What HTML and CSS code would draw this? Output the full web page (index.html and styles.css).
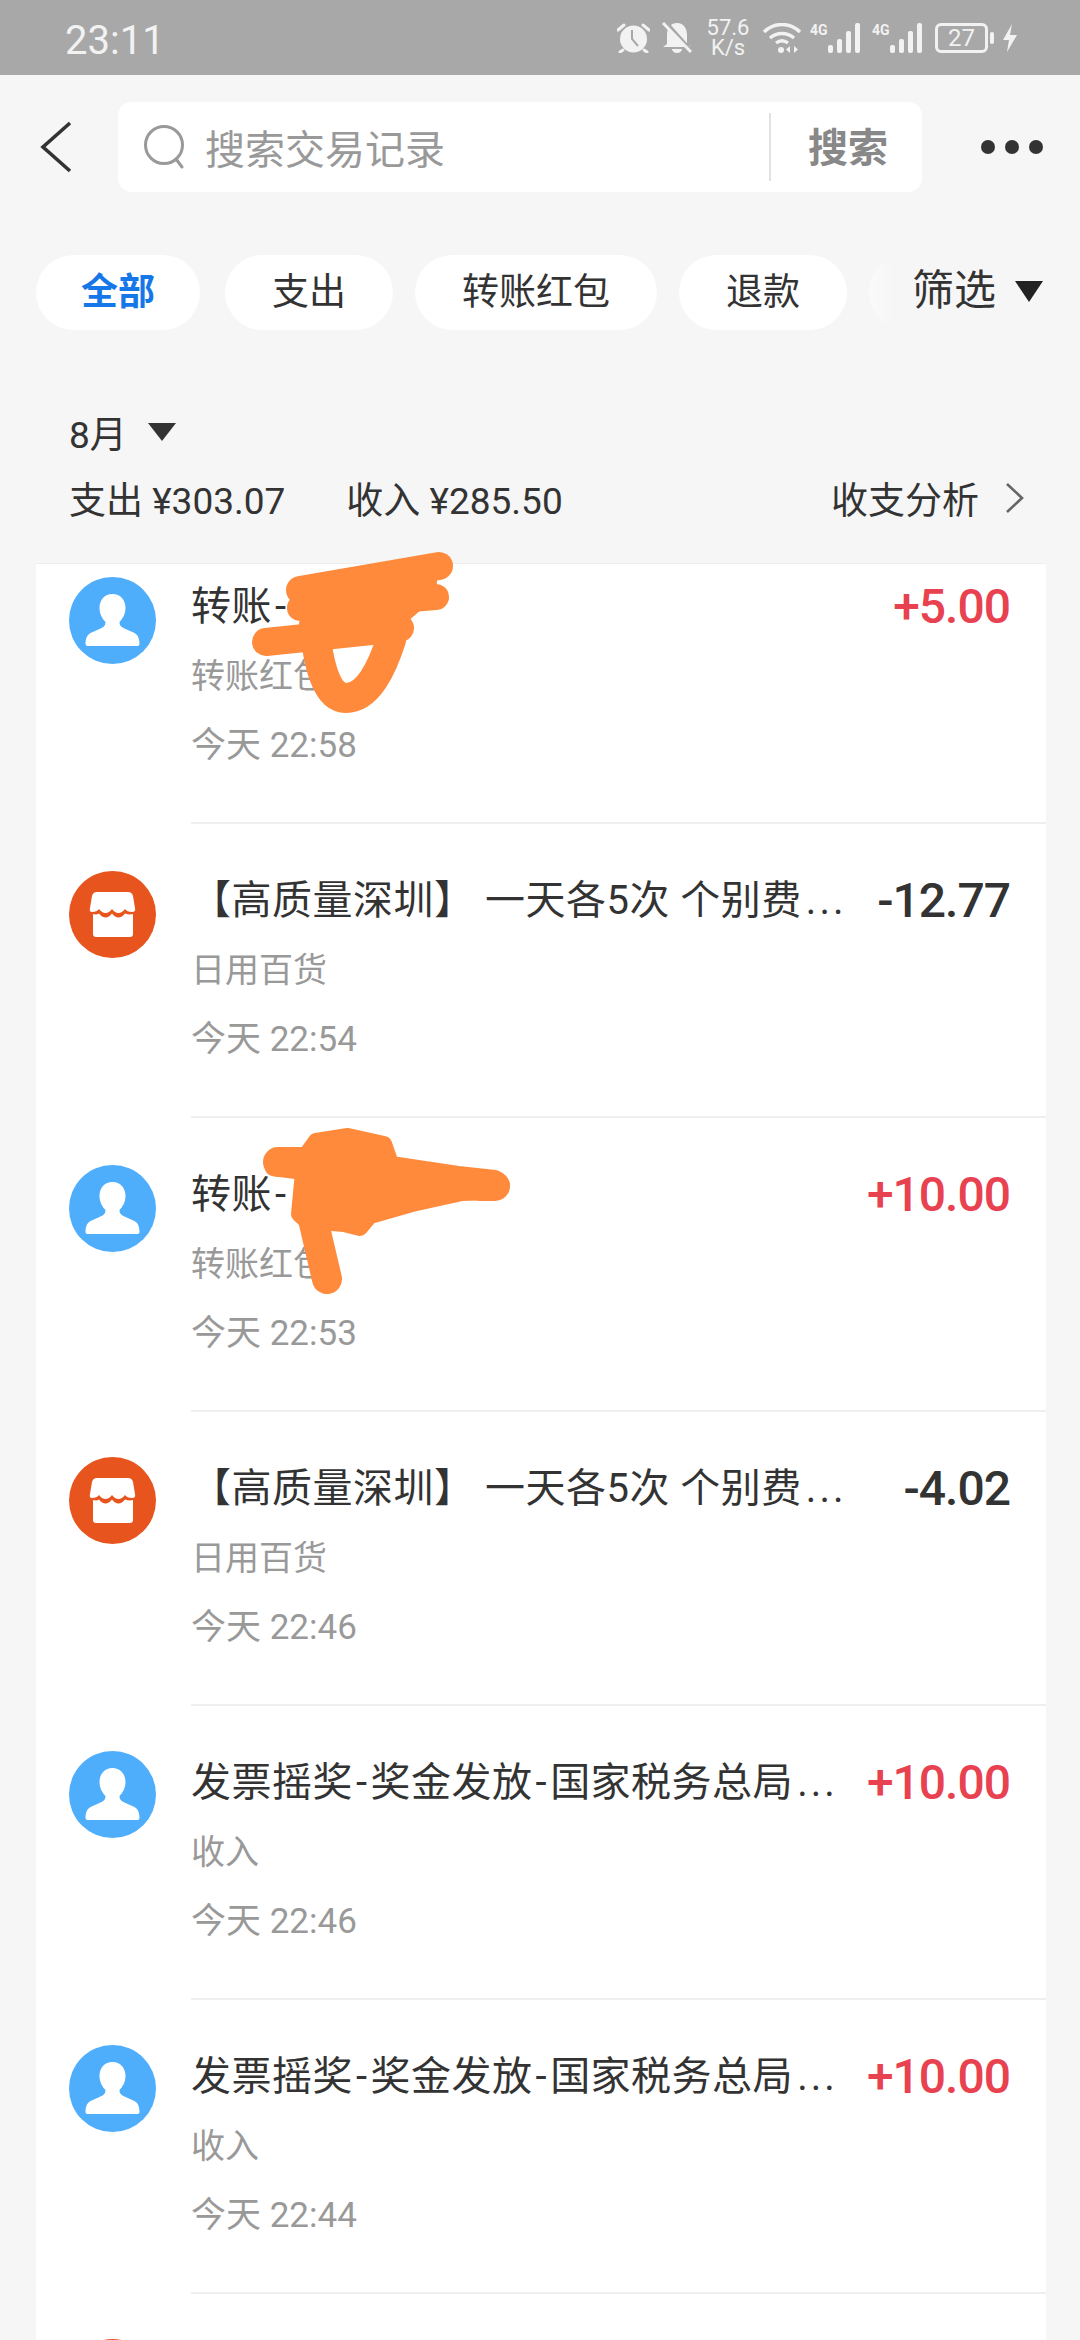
FILE: index.html
```html
<!DOCTYPE html>
<html lang="zh">
<head>
<meta charset="utf-8">
<title>交易记录</title>
<link rel="stylesheet" href="styles.css">
</head>
<body>
<div class="page">
  <header class="status">
    <span class="clock">23:11</span>
    <div class="status-icons">
      <svg class="ic-alarm" width="33" height="30" viewBox="0 0 33 30"><circle cx="16.500" cy="16" r="13.500" fill="#f2f2f2"/><path d="M15 7v9l6 7" fill="none" stroke="#a8a8a8" stroke-width="2"/><path d="M1 7l6-5M32 7l-6-5M6 27l-3 2M27 27l3 2" stroke="#f2f2f2" stroke-width="3" stroke-linecap="round"/></svg>
      <svg class="ic-bell" width="30" height="32" viewBox="0 0 30 32"><path d="M15 1C8 1 5 7 5 13v9l-4 3h28l-4-3v-9C25 7 22 1 15 1z" fill="#f2f2f2"/><path d="M10 27h10a5 4 0 0 1-10 0z" fill="#f2f2f2"/><path d="M4 0l26 29" stroke="#a8a8a8" stroke-width="3"/><path d="M1 1l28 29" stroke="#f2f2f2" stroke-width="3"/></svg>
      <div class="speed">57.6<br>K/s</div>
      <svg class="ic-wifi" width="38" height="30" viewBox="0 0 38 30"><path d="M1 9c10-10 26-10 36 0M7 15c7-6 17-6 24 0M13 20c4-3 8-3 12 0" fill="none" stroke="#f2f2f2" stroke-width="3.400"/><circle cx="18" cy="27" r="3" fill="#f2f2f2"/><path d="M27 23l-4 3.500 4 3.500zM31 23l4 3.500-4 3.500z" fill="#f2f2f2"/></svg>
      <div class="signal"><span class="net">4G</span><span class="bars"><i class="b1"></i><i class="b2"></i><i class="b3"></i><i class="b4"></i></span></div>
      <div class="signal"><span class="net">4G</span><span class="bars"><i class="b1"></i><i class="b2"></i><i class="b3"></i><i class="b4"></i></span></div>
      <div class="battery"><span class="batt-body">27</span><span class="batt-nub"></span></div>
      <svg class="ic-bolt" width="14" height="28" viewBox="0 0 14 28"><path d="M9 0L0 16h6l-2 12 10-17H7z" fill="#f2f2f2"/></svg>
    </div>
  </header>

  <nav class="nav">
    <svg class="back" width="32" height="52" viewBox="0 0 32 52"><path d="M30 2L3 26l27 24" fill="none" stroke="#333" stroke-width="3.600"/></svg>
    <div class="search">
      <svg class="search-ic" width="44" height="46" viewBox="0 0 44 46"><circle cx="21" cy="21" r="18.500" fill="none" stroke="#999" stroke-width="3"/><path d="M33 35l6 8" stroke="#999" stroke-width="3" stroke-linecap="round"/></svg>
      <span class="placeholder">搜索交易记录</span>
      <span class="search-btn">搜索</span>
    </div>
    <div class="more"><i></i><i></i><i></i></div>
  </nav>

  <div class="filters">
    <div class="chips">
      <span class="chip active">全部</span>
      <span class="chip">支出</span>
      <span class="chip">转账红包</span>
      <span class="chip">退款</span>
      <span class="chip chip-hidden"></span>
    </div>
    <div class="filter-btn"><span>筛选</span><i class="tri tri-lg"></i></div>
  </div>

  <section class="summary">
    <div class="month"><span>8月</span><i class="tri"></i></div>
    <div class="totals">
      <span class="out">支出 ¥303.07</span>
      <span class="in">收入 ¥285.50</span>
      <span class="analysis">收支分析</span>
      <svg class="more-arrow" width="20" height="32" viewBox="0 0 20 32"><path d="M2 2l15 14L2 30" fill="none" stroke="#666" stroke-width="2.600"/></svg>
    </div>
  </section>

  <main class="list">
    <div class="list-inner">
      <article class="row">
        <svg class="avatar" viewBox="0 0 87 87"><circle cx="43.500" cy="43.500" r="43.500" fill="#4eaefc"/><path class="person" d="M43.500 17c-8 0-13 6-13 14 0 6 3 11 6 14 0 4-2 5-6 7l-9 4c-4 2-5 7-5 11q0 2 2 2h50q2 0 2-2c0-4-1-9-5-11l-9-4c-4-2-6-3-6-7 3-3 6-8 6-14 0-8-5-14-13-14z"/></svg>
        <div class="body">
          <div class="top"><span class="title">转账<span class="dash">-</span></span><span class="amt plus">+5.00</span></div>
          <div class="sub">转账红包</div>
          <div class="time">今天 22:58</div>
        </div>
      </article>
      <article class="row">
        <svg class="avatar" viewBox="0 0 87 87"><circle cx="43.500" cy="43.500" r="43.500" fill="#e8541e"/><path class="shop" d="M28 21h31q4 0 5 4l2 12q1 4-3 4-5 0-7-3-3 4-6.500 4t-6.500-4q-3 4-6.500 4t-6.500-4q-2 3-7 3-3 0-2-4l2-12q1-4 5-4z"/><path class="shop" d="M24 43q4 1 6-.5 3 4 6.500 4t6.500-4q3 4 6.500 4t6.500-4q4 1.500 8 .5v20q0 3-3 3H27q-3 0-3-3z"/></svg>
        <div class="body">
          <div class="top"><span class="title">【高质量深圳】 一天各5次 个别费<span class="ell">...</span></span><span class="amt">-12.77</span></div>
          <div class="sub">日用百货</div>
          <div class="time">今天 22:54</div>
        </div>
      </article>
      <article class="row">
        <svg class="avatar" viewBox="0 0 87 87"><circle cx="43.500" cy="43.500" r="43.500" fill="#4eaefc"/><path class="person" d="M43.500 17c-8 0-13 6-13 14 0 6 3 11 6 14 0 4-2 5-6 7l-9 4c-4 2-5 7-5 11q0 2 2 2h50q2 0 2-2c0-4-1-9-5-11l-9-4c-4-2-6-3-6-7 3-3 6-8 6-14 0-8-5-14-13-14z"/></svg>
        <div class="body">
          <div class="top"><span class="title">转账<span class="dash">-</span></span><span class="amt plus">+10.00</span></div>
          <div class="sub">转账红包</div>
          <div class="time">今天 22:53</div>
        </div>
      </article>
      <article class="row">
        <svg class="avatar" viewBox="0 0 87 87"><circle cx="43.500" cy="43.500" r="43.500" fill="#e8541e"/><path class="shop" d="M28 21h31q4 0 5 4l2 12q1 4-3 4-5 0-7-3-3 4-6.500 4t-6.500-4q-3 4-6.500 4t-6.500-4q-2 3-7 3-3 0-2-4l2-12q1-4 5-4z"/><path class="shop" d="M24 43q4 1 6-.5 3 4 6.500 4t6.500-4q3 4 6.500 4t6.500-4q4 1.500 8 .5v20q0 3-3 3H27q-3 0-3-3z"/></svg>
        <div class="body">
          <div class="top"><span class="title">【高质量深圳】 一天各5次 个别费<span class="ell">...</span></span><span class="amt">-4.02</span></div>
          <div class="sub">日用百货</div>
          <div class="time">今天 22:46</div>
        </div>
      </article>
      <article class="row">
        <svg class="avatar" viewBox="0 0 87 87"><circle cx="43.500" cy="43.500" r="43.500" fill="#4eaefc"/><path class="person" d="M43.500 17c-8 0-13 6-13 14 0 6 3 11 6 14 0 4-2 5-6 7l-9 4c-4 2-5 7-5 11q0 2 2 2h50q2 0 2-2c0-4-1-9-5-11l-9-4c-4-2-6-3-6-7 3-3 6-8 6-14 0-8-5-14-13-14z"/></svg>
        <div class="body">
          <div class="top"><span class="title">发票摇奖<span class="dash">-</span>奖金发放<span class="dash">-</span>国家税务总局<span class="ell">...</span></span><span class="amt plus">+10.00</span></div>
          <div class="sub">收入</div>
          <div class="time">今天 22:46</div>
        </div>
      </article>
      <article class="row">
        <svg class="avatar" viewBox="0 0 87 87"><circle cx="43.500" cy="43.500" r="43.500" fill="#4eaefc"/><path class="person" d="M43.500 17c-8 0-13 6-13 14 0 6 3 11 6 14 0 4-2 5-6 7l-9 4c-4 2-5 7-5 11q0 2 2 2h50q2 0 2-2c0-4-1-9-5-11l-9-4c-4-2-6-3-6-7 3-3 6-8 6-14 0-8-5-14-13-14z"/></svg>
        <div class="body">
          <div class="top"><span class="title">发票摇奖<span class="dash">-</span>奖金发放<span class="dash">-</span>国家税务总局<span class="ell">...</span></span><span class="amt plus">+10.00</span></div>
          <div class="sub">收入</div>
          <div class="time">今天 22:44</div>
        </div>
      </article>
      <article class="row">
        <svg class="avatar" viewBox="0 0 87 87"><circle cx="43.500" cy="43.500" r="43.500" fill="#e8541e"/></svg>
      </article>
    </div>
  </main>

  <svg class="scribble" width="1080" height="2340" viewBox="0 0 1080 2340">
    <path class="ink-fill" d="M300 590L438 566L436 597L400 628L300 642Z"/>
    <path class="ink-line" d="M300 590L439 566" stroke-width="28"/>
    <path class="ink-line" d="M300 608L436 597" stroke-width="26"/>
    <path class="ink-line" d="M266 642L400 628" stroke-width="28"/>
    <path class="ink-line" d="M314 625C318 660 325 698 346 698C368 698 382 668 391 640" stroke-width="30"/>
    <path class="ink-round" d="M273 1160L306 1155L316 1141L348 1136L384 1144L391 1164L458 1174L495 1178L502 1185L494 1192L462 1193L412 1204L370 1216L360 1228L344 1224L320 1222L333 1280L327 1286L322 1279L310 1224L299 1214L303 1172L273 1168Z" stroke-width="16"/>
    <path class="ink-line" d="M278 1162H320" stroke-width="30"/>
    <path class="ink-line" d="M480 1186H495" stroke-width="30"/>
    <path class="ink-line" d="M312 1215L327 1279" stroke-width="30"/>
  </svg>
</div>
</body>
</html>
```
FILE: styles.css
```css
* { box-sizing: border-box; }
html, body { margin: 0; padding: 0; }
body { font-family: Roboto, "Noto Sans CJK SC", sans-serif; color: #333; background: #f6f6f6; }
i { display: block; font-style: normal; }
.page { position: relative; width: 1080px; height: 2340px; overflow: hidden; display: flex; flex-direction: column; background: #f6f6f6; }

/* status bar */
.status { height: 75px; flex: none; background: #a8a8a8; display: flex; align-items: center; justify-content: space-between; padding: 0 63px 0 65px; color: #f2f2f2; }
.clock { font-size: 40px; line-height: 44px; margin-top: 6px; }
.status-icons { display: flex; align-items: center; }
.ic-bell { margin-left: 12px; }
.speed { margin-left: 14px; width: 44px; text-align: center; font-size: 22px; line-height: 20px; }
.ic-wifi { margin-left: 13px; }
.signal { margin-left: 9px; display: flex; align-items: flex-start; height: 30px; }
.signal + .signal { margin-left: 12px; }
.net { font-size: 14px; line-height: 15px; font-weight: 700; width: 17px; }
.bars { display: flex; align-items: flex-end; gap: 4px; height: 30px; padding-left: 1px; }
.bars i { width: 5px; background: #f2f2f2; border-radius: 2px; }
.b1 { height: 8px; }
.b2 { height: 14px; }
.b3 { height: 22px; }
.b4 { height: 30px; }
.battery { margin-left: 13px; display: flex; align-items: center; }
.batt-body { width: 53px; height: 30px; border: 3px solid #f2f2f2; border-radius: 6px; font-size: 24px; line-height: 24px; text-align: center; }
.batt-nub { width: 4px; height: 12px; margin-left: 2px; background: #f2f2f2; border-radius: 2px; }
.ic-bolt { margin-left: 9px; }

/* nav */
.nav { flex: none; display: flex; align-items: center; margin-top: 27px; height: 90px; padding-left: 40px; }
.search { width: 804px; height: 90px; margin-left: 46px; background: #fff; border-radius: 14px; display: flex; align-items: center; padding-left: 25px; }
.placeholder { flex: 1; margin-left: 18px; font-size: 40px; color: #999; }
.search-btn { width: 153px; height: 68px; line-height: 72px; padding-left: 37px; border-left: 2px solid #e2e2e2; font-size: 40px; font-weight: 700; color: #888; white-space: nowrap; }
.more { margin-left: 59px; display: flex; gap: 10px; }
.more i { width: 14px; height: 14px; border-radius: 50%; background: #333; }

/* filter chips */
.filters { position: relative; flex: none; margin-top: 63px; height: 75px; overflow: hidden; }
.chips { display: flex; gap: 22px; padding-left: 36px; }
.chip { flex: none; height: 75px; padding: 0 47px; line-height: 75px; background: #fff; border-radius: 38px; font-size: 37px; color: #333; white-space: nowrap; }
.chip.active { padding: 0 45px; margin-right: 3px; color: #1677e8; font-weight: 700; }
.chip-hidden { width: 168px; }
.filter-btn { position: absolute; top: 0; right: 0; width: 211px; height: 75px; padding-left: 43px; display: flex; align-items: center; background: linear-gradient(to right, rgba(246,246,246,0.5), #f6f6f6 24px); font-size: 42px; }
.filter-btn span { margin-top: -12px; }
.tri { width: 0; height: 0; border-left: 14px solid transparent; border-right: 14px solid transparent; border-top: 18px solid #333; }
.tri-lg { margin-left: 19px; margin-top: -3px; border-top: 21px solid #222; }

/* monthly summary */
.summary { flex: none; height: 233px; padding: 0 0 0 69px; }
.month { display: flex; align-items: center; margin-top: 77px; height: 50px; font-size: 37px; }
.month .tri { margin-left: 21px; }
.totals { display: flex; align-items: center; margin-top: 16px; height: 50px; font-size: 37px; white-space: nowrap; }
.in { margin-left: 61px; }
.analysis { margin-left: auto; }
.more-arrow { margin-left: 26px; margin-right: 55px; }

/* list */
.list { flex: 1; min-height: 0; margin: 0 34px 0 36px; background: #fff; overflow: hidden; border-top: 1px solid #eee; }
.list-inner { margin-top: -34px; }
.row { height: 294px; display: flex; padding-left: 33px; }
.avatar { flex: none; width: 87px; height: 87px; margin-top: 47px; }
.row:nth-child(n+4) .avatar { margin-top: 45px; }
.person, .shop { fill: #fff; }
.body { flex: 1; min-width: 0; margin-left: 35px; border-bottom: 2px solid #efefef; padding-right: 36px; }
.top { display: flex; justify-content: space-between; margin-top: 52px; height: 50px; line-height: 50px; }
.title { min-width: 0; font-size: 40px; letter-spacing: 0.5px; white-space: nowrap; }
.dash { margin: 0 3px; }
.ell { margin-left: 4px; letter-spacing: 3px; }
.amt { font-size: 48px; letter-spacing: -1px; font-weight: 500; color: #333; white-space: nowrap; }
.amt.plus { color: #e8414f; }
.sub { margin-top: 19px; height: 50px; line-height: 50px; font-size: 34px; color: #999; }
.time { margin-top: 20px; height: 50px; line-height: 50px; font-size: 35px; color: #999; }

/* hand-drawn marks over the screenshot */
.scribble { position: absolute; top: 0; left: 0; pointer-events: none; }
.ink-fill { fill: #ff8a3c; }
.ink-line { fill: none; stroke: #ff8a3c; stroke-linecap: round; stroke-linejoin: round; }
.ink-round { fill: #ff8a3c; stroke: #ff8a3c; stroke-linejoin: round; }
```
